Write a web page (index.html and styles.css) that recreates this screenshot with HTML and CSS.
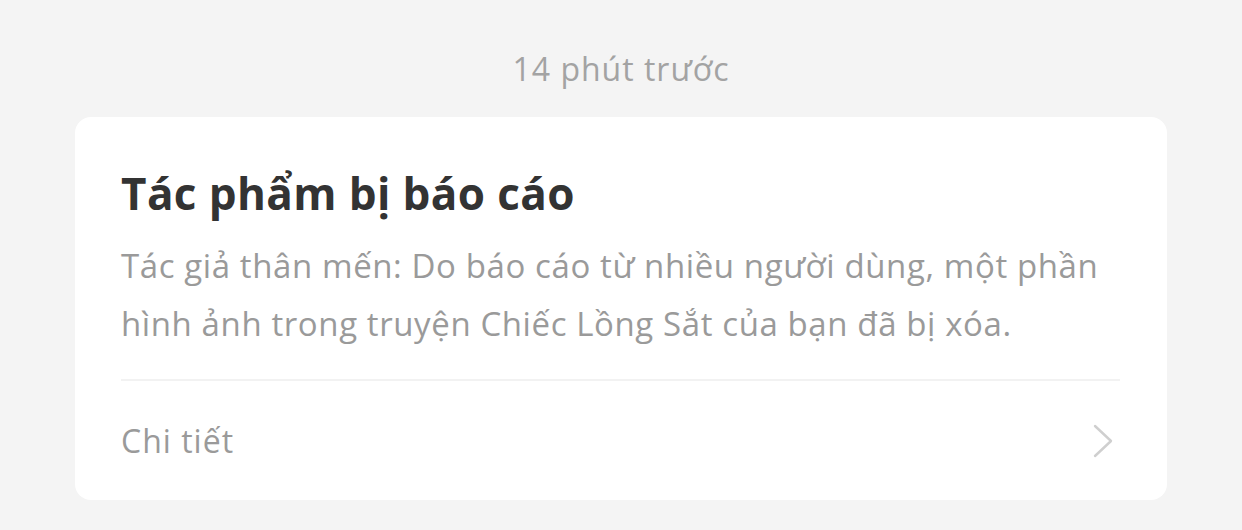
FILE: index.html
```html
<!DOCTYPE html>
<html>
<head>
<meta charset="utf-8">
<title>Thông báo</title>
<link rel="stylesheet" href="styles.css">
</head>
<body>

<div class="notice-list">
  <div class="notice-time">14 phút trước</div>
  <div class="notice-card">
    <div class="notice-body">
      <h3>Tác phẩm bị báo cáo</h3>
      <p>Tác giả thân mến: Do báo cáo từ nhiều người dùng, một phần hình ảnh trong truyện Chiếc Lồng Sắt của bạn đã bị xóa.</p>
    </div>
    <div class="notice-link">
      <span>Chi tiết</span>
      <svg class="chevron" width="22" height="34" viewBox="0 0 22 34">
        <path d="M3 2 L19 17 L3 32" fill="none" stroke="#cfcfcf" stroke-width="2.4" stroke-linecap="round" stroke-linejoin="round"/>
      </svg>
    </div>
  </div>
</div>

</body>
</html>
```

FILE: styles.css
```css
body {
  margin: 0;
  font-family: "Open Sans", "Noto Sans", sans-serif;
  background-color: #f4f4f4;
}
.notice-list {
  padding: 0 75px;
}
.notice-time {
  padding: 47px 0 26px;
  line-height: 44px;
  text-align: center;
  font-size: 32px;
  letter-spacing: 1px;
  color: #a3a3a3;
}
.notice-card {
  background-color: #fff;
  border-radius: 16px;
  padding: 0 47px 0 46px;
}
.notice-body {
  padding-top: 47px;
  padding-bottom: 26px;
  border-bottom: 2px solid #f2f2f2;
}
.notice-body h3 {
  margin: 0 0 15px;
  font-size: 44px;
  font-weight: bold;
  letter-spacing: 0.4px;
  color: #333;
  line-height: 58px;
}
.notice-body p {
  margin: 0;
  font-size: 33px;
  line-height: 58px;
  letter-spacing: 0.6px;
  color: #9a9a9a;
}
.notice-link {
  display: flex;
  align-items: center;
  justify-content: space-between;
  height: 119px;
  font-size: 32px;
  letter-spacing: 1px;
  color: #9a9a9a;
}
.chevron {
  margin-right: 6px;
}
```
